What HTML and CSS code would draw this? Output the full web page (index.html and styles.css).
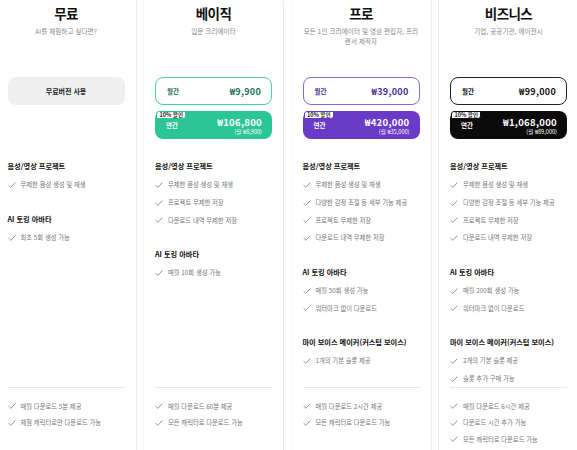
FILE: index.html
```html
<!DOCTYPE html>
<html lang="ko">
<head>
<meta charset="utf-8">
<link rel="stylesheet" href="styles.css">
</head>
<body>
<div class="plans">
  <section class="card">
    <h2 class="title">무료</h2>
    <p class="sub">AI를 체험하고 싶다면?</p>
    <div class="pricing">
      <button class="free-btn">무료버전 사용</button>
    </div>
    <div class="features">
      <h3 class="fh">음성/영상 프로젝트</h3>
      <ul class="list">
        <li><svg class="check" viewBox="0 0 8 6"><path d="M0.6 3.2 L2.8 5.3 L7.4 0.6"/></svg><span>무제한 음성 생성 및 재생</span></li>
      </ul>
      <h3 class="fh">AI 토킹 아바타</h3>
      <ul class="list">
        <li><svg class="check" viewBox="0 0 8 6"><path d="M0.6 3.2 L2.8 5.3 L7.4 0.6"/></svg><span>최초 5회 생성 가능</span></li>
      </ul>
    </div>
    <ul class="list bottom">
      <li><svg class="check" viewBox="0 0 8 6"><path d="M0.6 3.2 L2.8 5.3 L7.4 0.6"/></svg><span>매월 다운로드 5분 제공</span></li>
      <li><svg class="check" viewBox="0 0 8 6"><path d="M0.6 3.2 L2.8 5.3 L7.4 0.6"/></svg><span>체험 캐릭터로만 다운로드 가능</span></li>
    </ul>
  </section>

  <section class="card basic">
    <h2 class="title">베이직</h2>
    <p class="sub">입문 크리에이터</p>
    <div class="pricing">
      <div class="monthly"><span class="lbl">월간</span><span class="price">₩9,900</span></div>
      <div class="annual"><span class="badge">10% 할인</span><span class="lbl">연간</span><span class="aprice"><b>₩106,800</b><small>(월 ₩8,900)</small></span></div>
    </div>
    <div class="features">
      <h3 class="fh">음성/영상 프로젝트</h3>
      <ul class="list">
        <li><svg class="check" viewBox="0 0 8 6"><path d="M0.6 3.2 L2.8 5.3 L7.4 0.6"/></svg><span>무제한 음성 생성 및 재생</span></li>
        <li><svg class="check" viewBox="0 0 8 6"><path d="M0.6 3.2 L2.8 5.3 L7.4 0.6"/></svg><span>프로젝트 무제한 저장</span></li>
        <li><svg class="check" viewBox="0 0 8 6"><path d="M0.6 3.2 L2.8 5.3 L7.4 0.6"/></svg><span>다운로드 내역 무제한 저장</span></li>
      </ul>
      <h3 class="fh">AI 토킹 아바타</h3>
      <ul class="list">
        <li><svg class="check" viewBox="0 0 8 6"><path d="M0.6 3.2 L2.8 5.3 L7.4 0.6"/></svg><span>매월 10회 생성 가능</span></li>
      </ul>
    </div>
    <ul class="list bottom">
      <li><svg class="check" viewBox="0 0 8 6"><path d="M0.6 3.2 L2.8 5.3 L7.4 0.6"/></svg><span>매월 다운로드 60분 제공</span></li>
      <li><svg class="check" viewBox="0 0 8 6"><path d="M0.6 3.2 L2.8 5.3 L7.4 0.6"/></svg><span>모든 캐릭터로 다운로드 가능</span></li>
    </ul>
  </section>

  <section class="card pro">
    <h2 class="title">프로</h2>
    <p class="sub">모든 1인 크리에이터 및 영상 편집자, 프리랜서 제작자</p>
    <div class="pricing">
      <div class="monthly"><span class="lbl">월간</span><span class="price">₩39,000</span></div>
      <div class="annual"><span class="badge">10% 할인</span><span class="lbl">연간</span><span class="aprice"><b>₩420,000</b><small>(월 ₩35,000)</small></span></div>
    </div>
    <div class="features">
      <h3 class="fh">음성/영상 프로젝트</h3>
      <ul class="list">
        <li><svg class="check" viewBox="0 0 8 6"><path d="M0.6 3.2 L2.8 5.3 L7.4 0.6"/></svg><span>무제한 음성 생성 및 재생</span></li>
        <li><svg class="check" viewBox="0 0 8 6"><path d="M0.6 3.2 L2.8 5.3 L7.4 0.6"/></svg><span>다양한 감정 조절 등 세부 기능 제공</span></li>
        <li><svg class="check" viewBox="0 0 8 6"><path d="M0.6 3.2 L2.8 5.3 L7.4 0.6"/></svg><span>프로젝트 무제한 저장</span></li>
        <li><svg class="check" viewBox="0 0 8 6"><path d="M0.6 3.2 L2.8 5.3 L7.4 0.6"/></svg><span>다운로드 내역 무제한 저장</span></li>
      </ul>
      <h3 class="fh">AI 토킹 아바타</h3>
      <ul class="list">
        <li><svg class="check" viewBox="0 0 8 6"><path d="M0.6 3.2 L2.8 5.3 L7.4 0.6"/></svg><span>매월 50회 생성 가능</span></li>
        <li><svg class="check" viewBox="0 0 8 6"><path d="M0.6 3.2 L2.8 5.3 L7.4 0.6"/></svg><span>워터마크 없이 다운로드</span></li>
      </ul>
      <h3 class="fh">마이 보이스 메이커(커스텀 보이스)</h3>
      <ul class="list">
        <li><svg class="check" viewBox="0 0 8 6"><path d="M0.6 3.2 L2.8 5.3 L7.4 0.6"/></svg><span>1개의 기본 슬롯 제공</span></li>
      </ul>
    </div>
    <ul class="list bottom">
      <li><svg class="check" viewBox="0 0 8 6"><path d="M0.6 3.2 L2.8 5.3 L7.4 0.6"/></svg><span>매월 다운로드 2시간 제공</span></li>
      <li><svg class="check" viewBox="0 0 8 6"><path d="M0.6 3.2 L2.8 5.3 L7.4 0.6"/></svg><span>모든 캐릭터로 다운로드 가능</span></li>
    </ul>
  </section>

  <section class="card biz">
    <h2 class="title">비즈니스</h2>
    <p class="sub">기업, 공공기관, 에이전시</p>
    <div class="pricing">
      <div class="monthly"><span class="lbl">월간</span><span class="price">₩99,000</span></div>
      <div class="annual"><span class="badge">10% 할인</span><span class="lbl">연간</span><span class="aprice"><b>₩1,068,000</b><small>(월 ₩89,000)</small></span></div>
    </div>
    <div class="features">
      <h3 class="fh">음성/영상 프로젝트</h3>
      <ul class="list">
        <li><svg class="check" viewBox="0 0 8 6"><path d="M0.6 3.2 L2.8 5.3 L7.4 0.6"/></svg><span>무제한 음성 생성 및 재생</span></li>
        <li><svg class="check" viewBox="0 0 8 6"><path d="M0.6 3.2 L2.8 5.3 L7.4 0.6"/></svg><span>다양한 감정 조절 등 세부 기능 제공</span></li>
        <li><svg class="check" viewBox="0 0 8 6"><path d="M0.6 3.2 L2.8 5.3 L7.4 0.6"/></svg><span>프로젝트 무제한 저장</span></li>
        <li><svg class="check" viewBox="0 0 8 6"><path d="M0.6 3.2 L2.8 5.3 L7.4 0.6"/></svg><span>다운로드 내역 무제한 저장</span></li>
      </ul>
      <h3 class="fh">AI 토킹 아바타</h3>
      <ul class="list">
        <li><svg class="check" viewBox="0 0 8 6"><path d="M0.6 3.2 L2.8 5.3 L7.4 0.6"/></svg><span>매월 200회 생성 가능</span></li>
        <li><svg class="check" viewBox="0 0 8 6"><path d="M0.6 3.2 L2.8 5.3 L7.4 0.6"/></svg><span>워터마크 없이 다운로드</span></li>
      </ul>
      <h3 class="fh">마이 보이스 메이커(커스텀 보이스)</h3>
      <ul class="list">
        <li><svg class="check" viewBox="0 0 8 6"><path d="M0.6 3.2 L2.8 5.3 L7.4 0.6"/></svg><span>2개의 기본 슬롯 제공</span></li>
        <li><svg class="check" viewBox="0 0 8 6"><path d="M0.6 3.2 L2.8 5.3 L7.4 0.6"/></svg><span>슬롯 추가 구매 가능</span></li>
      </ul>
    </div>
    <ul class="list bottom">
      <li><svg class="check" viewBox="0 0 8 6"><path d="M0.6 3.2 L2.8 5.3 L7.4 0.6"/></svg><span>매월 다운로드 6시간 제공</span></li>
      <li><svg class="check" viewBox="0 0 8 6"><path d="M0.6 3.2 L2.8 5.3 L7.4 0.6"/></svg><span>다운로드 시간 추가 가능</span></li>
      <li><svg class="check" viewBox="0 0 8 6"><path d="M0.6 3.2 L2.8 5.3 L7.4 0.6"/></svg><span>모든 캐릭터로 다운로드 가능</span></li>
    </ul>
  </section>
</div>
</body>
</html>
```

FILE: styles.css
```css
* { box-sizing: border-box; }
html, body {
  margin: 0;
  padding: 0;
  background: #fff;
  overflow: hidden;
  height: 450px;
}
body {
  font-family: "Noto Sans CJK KR", "Noto Sans", sans-serif;
  color: #111;
}
.plans {
  display: grid;
  grid-template-columns: repeat(4, 141px);
  column-gap: 6.5px;
  margin: -6px 0 0 -4.5px;
}
.card {
  border: 1px solid #f8f8f8;
  border-right-color: #ececec;
  border-radius: 8px;
  padding: 9px 11px 20px;
  min-height: 480px;
}
.card.biz {
  border-left-color: #ececec;
}
.title {
  margin: 0;
  font-size: 13.5px;
  line-height: 18px;
  font-weight: 700;
  text-align: center;
  letter-spacing: -0.6px;
}
.sub {
  margin: 4px 0 0;
  height: 20px;
  font-size: 6.5px;
  line-height: 10px;
  letter-spacing: 0.1px;
  color: #888;
  text-align: center;
}
.pricing {
  margin-top: 31px;
  height: 62px;
  display: flex;
  flex-direction: column;
  gap: 6px;
}
.free-btn {
  height: 28px;
  flex: none;
  border: none;
  border-radius: 8px;
  background: #efefef;
  font-family: inherit;
  font-size: 7px;
  font-weight: 700;
  color: #222;
  padding: 0;
}
.monthly, .annual {
  position: relative;
  flex: none;
  height: 28px;
  border-radius: 8px;
  display: flex;
  align-items: center;
  justify-content: space-between;
  padding: 0 10px 0 11px;
}
.monthly {
  border: 1px solid var(--c2);
  color: var(--c3);
}
.annual {
  background: var(--c1);
  color: #fff;
}
.lbl {
  font-size: 6.5px;
  font-weight: 700;
}
.price {
  font-size: 9px;
  font-weight: 700;
  letter-spacing: 0.3px;
}
.aprice {
  display: flex;
  flex-direction: column;
  align-items: flex-end;
  padding-top: 1px;
}
.aprice b {
  font-size: 9.5px;
  line-height: 12px;
  letter-spacing: 0.3px;
}
.aprice small {
  font-size: 5.6px;
  line-height: 8px;
}
.badge {
  position: absolute;
  left: 1px;
  top: 0;
  background: #fff;
  border: 1px solid var(--c1);
  border-radius: 3px 0 3px 0;
  color: #222;
  font-size: 5.5px;
  font-weight: 700;
  line-height: 6px;
  padding: 0 2.5px;
}
.basic { --c1: #2bc596; --c2: #4ccfa5; --c3: #1b6e57; }
.pro { --c1: #6b3ac7; --c2: #8a6ad2; --c3: #4a2a92; }
.biz { --c1: #0b0b0b; --c2: #222; --c3: #111; }
.features {
  margin-top: 17px;
  height: 232px;
  border-bottom: 1px solid #e9e9e9;
}
.fh {
  margin: 0;
  font-size: 7.2px;
  line-height: 20px;
  font-weight: 700;
  color: #111;
  white-space: nowrap;
}
.list {
  list-style: none;
  margin: 0 0 15px;
  padding: 0;
}
.list li {
  display: flex;
  align-items: center;
  gap: 5px;
  height: 17.7px;
  font-size: 6.3px;
  color: #777;
  white-space: nowrap;
}
.check {
  width: 8px;
  height: 6px;
  flex: none;
  fill: none;
  stroke: #888;
  stroke-width: 0.9;
}
.bottom {
  margin-top: 10px;
}
.bottom li {
  height: 16.5px;
}
```
